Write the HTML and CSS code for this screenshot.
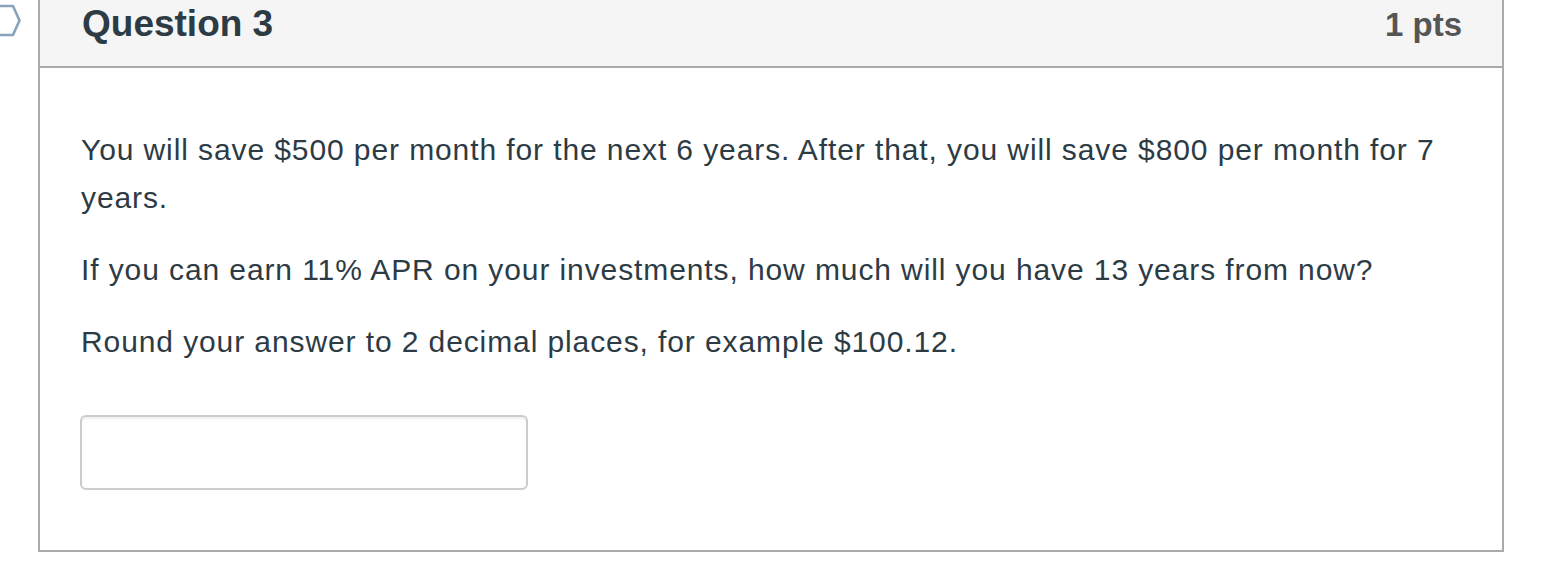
FILE: index.html
```html
<!DOCTYPE html>
<html>
<head>
<meta charset="utf-8">
<link rel="stylesheet" href="styles.css">
</head>
<body>
<div class="page">
  <div class="gutter">
    <svg class="flag" width="24" height="40" viewBox="0 0 24 40" aria-hidden="true">
      <path d="M-4 6 H13 L19.5 20.5 L13 35 H-4" fill="none" stroke="#88a3ba" stroke-width="2.6" stroke-linejoin="round"/>
    </svg>
  </div>
  <div class="question">
    <div class="q-header">
      <h2 class="q-title">Question 3</h2>
      <span class="q-points">1 pts</span>
    </div>
    <div class="q-body">
      <p>You will save $500 per month for the next 6 years. After that, you will save $800 per month for 7 years.</p>
      <p>If you can earn 11% APR on your investments, how much will you have 13 years from now?</p>
      <p>Round your answer to 2 decimal places, for example $100.12.</p>
      <input class="answer" type="text">
    </div>
  </div>
</div>
</body>
</html>
```
FILE: styles.css
```css
html, body {
  margin: 0;
  padding: 0;
  background: #ffffff;
}
body {
  font-family: "Liberation Sans", Arial, Helvetica, sans-serif;
  color: #2d3b45;
}
.page {
  display: flex;
  align-items: flex-start;
}
.gutter {
  width: 38px;
  flex: 0 0 38px;
}
.flag {
  display: block;
}
.question {
  width: 1462px;
  border: 2px solid #aaaaaa;
  border-top: none;
  background: #ffffff;
}
.q-header {
  height: 66px;
  background: #f5f5f5;
  border-bottom: 2px solid #aaaaaa;
  display: flex;
  align-items: center;
  justify-content: space-between;
  padding: 0 40px 0 42px;
}
.q-title {
  margin: 0;
  font-size: 37px;
  font-weight: bold;
  color: #2d3b45;
  line-height: 1;
  position: relative;
  top: -10px;
}
.q-points {
  font-size: 33px;
  font-weight: bold;
  color: #555555;
  line-height: 1;
  position: relative;
  top: -9px;
}
.q-body {
  padding: 34px 40px 60px 40px;
}
.q-body p {
  margin: 24px 0;
  font-size: 30px;
  line-height: 48px;
  letter-spacing: 0.9px;
  padding-left: 1px;
}
.answer {
  display: block;
  margin-top: 49px;
  width: 448px;
  height: 75px;
  box-sizing: border-box;
  border: 2px solid #cccccc;
  border-radius: 6px;
  box-shadow: inset 0 2px 2px rgba(0,0,0,0.06);
  background: #ffffff;
  padding: 0 12px;
  font-size: 28px;
  font-family: inherit;
}
```
